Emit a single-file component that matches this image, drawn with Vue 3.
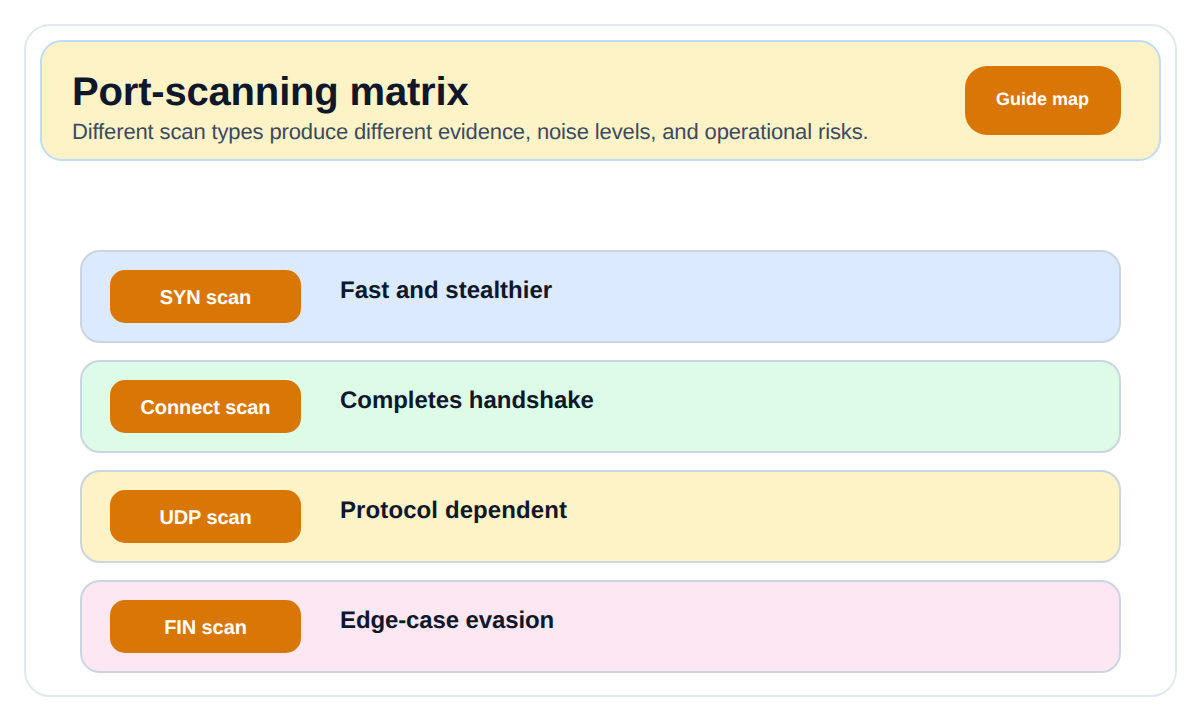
<script setup>
const rows = [
  { label: 'SYN scan', text: 'Fast and stealthier', tone: 'blue' },
  { label: 'Connect scan', text: 'Completes handshake', tone: 'green' },
  { label: 'UDP scan', text: 'Protocol dependent', tone: 'yellow' },
  { label: 'FIN scan', text: 'Edge-case evasion', tone: 'pink' },
]
</script>

<template>
  <main class="page">
    <section class="card">
      <header class="header">
        <div class="titles">
          <h1>Port-scanning matrix</h1>
          <p>Different scan types produce different evidence, noise levels, and operational risks.</p>
        </div>
        <div class="guide">Guide map</div>
      </header>
      <div class="rows">
        <div v-for="row in rows" :key="row.label" class="row" :class="row.tone">
          <div class="pill">{{ row.label }}</div>
          <div class="text">{{ row.text }}</div>
        </div>
      </div>
    </section>
  </main>
</template>

<style>
html, body { margin: 0; background: #ffffff; }
</style>

<style scoped>
.page {
  width: 1200px;
  height: 720px;
  box-sizing: border-box;
  padding: 24px 23px 23px 24px;
  font-family: "Liberation Sans", Arial, sans-serif;
  text-rendering: geometricPrecision;
}
.card {
  height: 673px;
  box-sizing: border-box;
  padding: 14px;
  border: 2px solid #e2e8f0;
  border-radius: 26px;
  background: #ffffff;
}
.header {
  height: 121px;
  box-sizing: border-box;
  display: flex;
  align-items: flex-start;
  justify-content: space-between;
  padding: 24px 38px 0 30px;
  border: 2px solid #bfdbfe;
  border-radius: 22px;
  background: #fef3c7;
}
.titles {
  padding-top: 3px;
}
h1 {
  margin: 0 0 4px;
  font-size: 40px;
  line-height: 46px;
  font-weight: 700;
  letter-spacing: -0.18px;
  color: #0f172a;
}
p {
  margin: 0;
  font-size: 22px;
  line-height: 26px;
  letter-spacing: -0.13px;
  color: #3b4a5f;
}
.guide {
  width: 156px;
  height: 69px;
  box-sizing: border-box;
  padding: 0 1px 2px 0;
  display: flex;
  align-items: center;
  justify-content: center;
  border-radius: 22px;
  background: #d97706;
  color: #ffffff;
  font-size: 18px;
  font-weight: 700;
}
.rows {
  display: flex;
  flex-direction: column;
  gap: 17px;
  margin: 89px 40px 0;
}
.row {
  height: 93px;
  box-sizing: border-box;
  display: flex;
  align-items: flex-start;
  gap: 39px;
  padding: 18px 28px;
  border: 2px solid #cbd5e1;
  border-radius: 20px;
}
.blue { background: #dbeafe; }
.green { background: #dcfce7; }
.yellow { background: #fef3c7; }
.pink { background: #fce7f3; }
.pill {
  width: 191px;
  height: 53px;
  box-sizing: border-box;
  padding-top: 4px;
  flex: none;
  display: flex;
  align-items: center;
  justify-content: center;
  border-radius: 15px;
  background: #d97706;
  color: #ffffff;
  font-size: 20px;
  font-weight: 700;
  letter-spacing: -0.1px;
}
.text {
  font-size: 24px;
  line-height: 42px;
  font-weight: 700;
  color: #0f172a;
}
.green .text { letter-spacing: -0.05px; }
.yellow .text { letter-spacing: 0.1px; }
.pink .text { letter-spacing: -0.12px; }
</style>
